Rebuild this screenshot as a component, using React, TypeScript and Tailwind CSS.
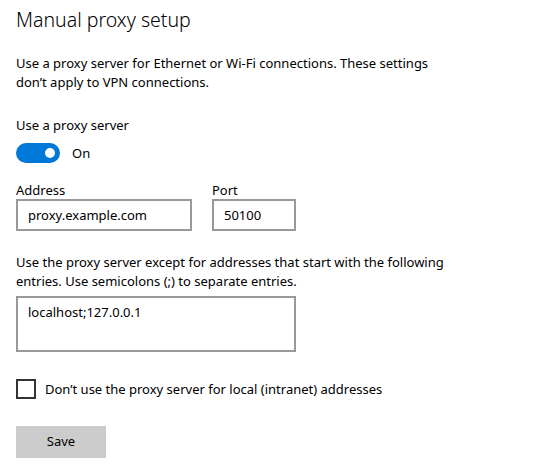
import React, { useState } from 'react';

const font = { fontFamily: '"Noto Sans", "Open Sans", sans-serif' };

export default function App() {
    const [enabled, setEnabled] = useState(true);
    const [bypassLocal, setBypassLocal] = useState(false);

    return (
        <div className="w-[535px] h-[476px] bg-white text-black px-4 pt-[6px] text-[13px]" style={font}>
            {/* Heading */}
            <h1 className="text-[19.5px] font-light leading-[28px]">Manual proxy setup</h1>

            <p className="mt-[20px] leading-[19px] w-[446px]">
                Use a proxy server for Ethernet or Wi-Fi connections. These settings don’t apply to VPN connections.
            </p>

            {/* Toggle */}
            <div className="mt-[24px] leading-[19px]">Use a proxy server</div>
            <div className="mt-[8px] flex items-center gap-3">
                <button
                    onClick={() => setEnabled(!enabled)}
                    className={`w-[44px] h-[20px] rounded-full flex items-center px-[5px] ${enabled ? 'bg-[#0078d7] justify-end' : 'bg-white border-2 border-black justify-start'}`}
                >
                    <span className={`w-[10px] h-[10px] rounded-full ${enabled ? 'bg-white' : 'bg-black'}`} />
                </button>
                <span className="leading-[19px]">{enabled ? 'On' : 'Off'}</span>
            </div>

            {/* Address / Port */}
            <div className="mt-[19px] flex gap-[20px]">
                <div className="flex flex-col">
                    <label className="leading-[17px]">Address</label>
                    <input
                        defaultValue="proxy.example.com"
                        className="w-[176px] h-[32px] border-2 border-[#999999] px-[10px] outline-none text-[13px]"
                        style={font}
                    />
                </div>
                <div className="flex flex-col">
                    <label className="leading-[17px]">Port</label>
                    <input
                        defaultValue="50100"
                        className="w-[84px] h-[32px] border-2 border-[#999999] px-[10px] outline-none text-[13px]"
                        style={font}
                    />
                </div>
            </div>

            {/* Exceptions */}
            <p className="mt-[22px] leading-[19px] w-[446px]">
                Use the proxy server except for addresses that start with the following entries. Use semicolons (;) to separate entries.
            </p>
            <textarea
                defaultValue="localhost;127.0.0.1"
                className="mt-[5px] block w-[280px] h-[56px] border-2 border-[#999999] px-[10px] py-[5px] resize-none outline-none leading-[19px] text-[13px]"
                style={font}
            />

            {/* Checkbox */}
            <label className="mt-[27px] flex items-center gap-[9px] cursor-pointer">
                <input
                    type="checkbox"
                    checked={bypassLocal}
                    onChange={() => setBypassLocal(!bypassLocal)}
                    className="appearance-none m-0 w-[20px] h-[20px] border-2 border-[#333333] bg-white checked:bg-[#0078d7] checked:border-[#0078d7]"
                />
                <span className="leading-[19px]">Don’t use the proxy server for local (intranet) addresses</span>
            </label>

            {/* Save */}
            <button className="mt-[27px] w-[90px] h-[32px] bg-[#cccccc] text-[13px]" style={font}>
                Save
            </button>
        </div>
    );
}
